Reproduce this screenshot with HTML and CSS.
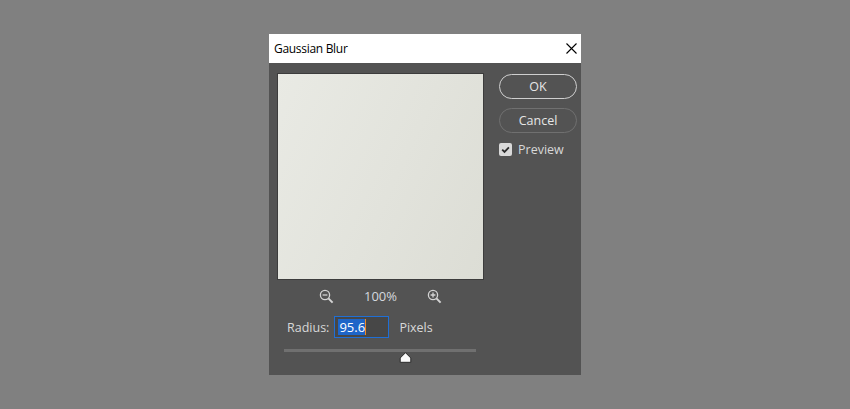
FILE: index.html
```html
<!DOCTYPE html>
<html>
<head>
<meta charset="utf-8">
<link rel="stylesheet" href="styles.css">
</head>
<body>
<div class="dialog">
  <div class="titlebar">
    <span class="title">Gaussian Blur</span>
    <svg class="close" width="11" height="11" viewBox="0 0 11 11"><path d="M0.5 0.5L10.5 10.5M10.5 0.5L0.5 10.5" stroke="#000" stroke-width="1.1" fill="none"/></svg>
  </div>
  <div class="body">
    <div class="left">
      <div class="preview"></div>
      <div class="zoom-row">
        <svg width="15" height="15" viewBox="0 0 15 15"><circle cx="6" cy="6" r="4.6" fill="none" stroke="#d4d4d4" stroke-width="1.3"/><path d="M3.6 6h4.8" stroke="#d4d4d4" stroke-width="1.3"/><path d="M9.4 9.4L13.6 13.6" stroke="#d4d4d4" stroke-width="2"/></svg>
        <span class="zoom-text">100%</span>
        <svg width="15" height="15" viewBox="0 0 15 15"><circle cx="6" cy="6" r="4.6" fill="none" stroke="#d4d4d4" stroke-width="1.3"/><path d="M3.6 6h4.8M6 3.6v4.8" stroke="#d4d4d4" stroke-width="1.3"/><path d="M9.4 9.4L13.6 13.6" stroke="#d4d4d4" stroke-width="2"/></svg>
      </div>
      <div class="radius-row">
        <span class="label">Radius:</span>
        <div class="input"><span class="sel">95.6</span><span class="caret"></span></div>
        <span class="unit">Pixels</span>
      </div>
      <div class="slider">
        <div class="track"></div>
        <svg class="thumb" width="13" height="11" viewBox="0 0 13 11"><path d="M6.5 0.7L11.8 6V10.3H1.2V6Z" fill="#fafafa" stroke="#2a2a2a" stroke-width="1"/></svg>
      </div>
    </div>
    <div class="right">
      <div class="btn btn-ok">OK</div>
      <div class="btn btn-cancel">Cancel</div>
      <div class="check-row">
        <span class="checkbox"><svg width="13" height="13" viewBox="0 0 13 13"><path d="M3.2 6.6L5.5 8.9L9.9 4.3" stroke="#2b2b2b" stroke-width="1.8" fill="none"/></svg></span>
        <span class="check-label">Preview</span>
      </div>
    </div>
  </div>
</div>
</body>
</html>
```

FILE: styles.css
```css
html, body {
  margin: 0;
  padding: 0;
  background: #808080;
}
body {
  font-family: "Open Sans", "Noto Sans", sans-serif;
  font-size: 12px;
  padding-top: 34px;
  padding-left: 269px;
  height: 409px;
  box-sizing: border-box;
}
.dialog {
  width: 312px;
  height: 341px;
  display: flex;
  flex-direction: column;
  background: #535353;
}
.titlebar {
  height: 29px;
  background: #ffffff;
  display: flex;
  align-items: center;
  justify-content: space-between;
  padding: 0 4px 0 5px;
  flex-shrink: 0;
}
.title {
  color: #000;
  font-size: 12px;
  letter-spacing: -0.3px;
  margin-top: -1px;
}
.close {
  display: block;
}
.body {
  display: flex;
  padding: 10px 4px 0 8px;
}
.left {
  width: 207px;
  display: flex;
  flex-direction: column;
}
.preview {
  width: 207px;
  height: 207px;
  box-sizing: border-box;
  border: 1px solid #3c3c3c;
  background: linear-gradient(115deg, #e9eae4 0%, #e2e3dc 55%, #dcddd5 100%);
}
.zoom-row {
  display: flex;
  align-items: center;
  justify-content: center;
  gap: 30px;
  margin-top: 8px;
  height: 16px;
}
.zoom-row svg {
  display: block;
}
.zoom-text {
  color: #d4d8de;
  font-size: 13px;
}
.radius-row {
  display: flex;
  align-items: center;
  margin-top: 12px;
  padding-left: 10px;
  height: 22px;
}
.label, .unit, .check-label {
  color: #d8d8d8;
  font-size: 12.5px;
}
.input {
  margin-left: 5px;
  width: 55px;
  height: 22px;
  box-sizing: border-box;
  border: 1px solid #1f6fd6;
  background: #474747;
  display: flex;
  align-items: center;
  padding-left: 3px;
}
.sel {
  background: #1e65c8;
  color: #ffffff;
  font-size: 13px;
  line-height: 16px;
  padding: 0 0 0 1px;
}
.caret {
  width: 1px;
  height: 16px;
  background: #f08a24;
}
.unit {
  margin-left: 10px;
}
.slider {
  position: relative;
  margin-top: 11px;
  margin-left: 7px;
  width: 192px;
  height: 16px;
}
.track {
  height: 3px;
  background: #707070;
}
.thumb {
  position: absolute;
  left: 115px;
  top: 3px;
  display: block;
}
.right {
  margin-left: 15px;
  margin-top: 1px;
  width: 78px;
  display: flex;
  flex-direction: column;
}
.btn {
  height: 25px;
  box-sizing: border-box;
  border-radius: 13px;
  display: flex;
  align-items: center;
  justify-content: center;
  color: #e6e6e6;
  font-size: 12.5px;
}
.btn-ok {
  border: 1.5px solid #cfcfcf;
}
.btn-cancel {
  margin-top: 9px;
  border: 1.5px solid #707070;
}
.check-row {
  display: flex;
  align-items: center;
  margin-top: 9px;
  height: 15px;
}
.checkbox {
  width: 13px;
  height: 13px;
  border-radius: 2px;
  background: #d9d9d9;
  display: block;
}
.checkbox svg {
  display: block;
}
.check-label {
  margin-left: 6px;
}
```
